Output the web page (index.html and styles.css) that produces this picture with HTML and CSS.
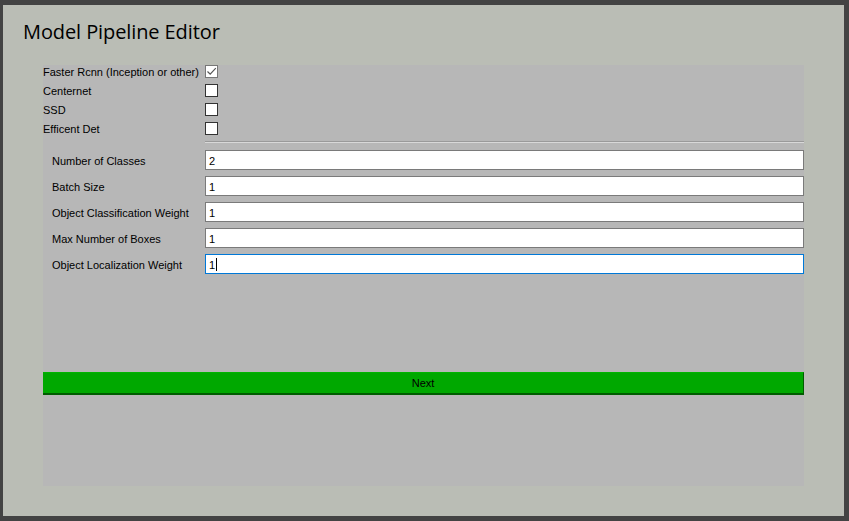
FILE: index.html
```html
<!DOCTYPE html>
<html>
<head>
<meta charset="utf-8">
<link rel="stylesheet" href="styles.css">
</head>
<body>
<div class="window">
  <h1 class="title">Model Pipeline Editor</h1>
  <div class="panel">
    <div class="checks">
      <label class="check-row"><span class="check-label">Faster Rcnn (Inception or other)</span><span class="box checked"><svg width="11" height="11" viewBox="0 0 11 11"><path d="M1.5 5.5 L4.2 8.2 L9.8 2.2" fill="none" stroke="#555" stroke-width="1.2"/></svg></span></label>
      <label class="check-row"><span class="check-label">Centernet</span><span class="box"></span></label>
      <label class="check-row"><span class="check-label">SSD</span><span class="box"></span></label>
      <label class="check-row"><span class="check-label">Efficent Det</span><span class="box"></span></label>
    </div>
    <div class="sep"></div>
    <div class="fields">
      <div class="field"><span class="field-label">Number of Classes</span><div class="input">2</div></div>
      <div class="field"><span class="field-label">Batch Size</span><div class="input">1</div></div>
      <div class="field"><span class="field-label">Object Classification Weight</span><div class="input">1</div></div>
      <div class="field"><span class="field-label">Max Number of Boxes</span><div class="input">1</div></div>
      <div class="field"><span class="field-label">Object Localization Weight</span><div class="input focus">1<span class="caret"></span></div></div>
    </div>
    <div class="btn">Next</div>
  </div>
</div>
</body>
</html>
```
FILE: styles.css
```css
html, body {
  margin: 0;
  padding: 0;
}
body {
  background: #434343;
  width: 849px;
  height: 521px;
  overflow: hidden;
  padding-top: 5px;
  box-sizing: border-box;
  font-family: "Liberation Sans", Arial, sans-serif;
  font-size: 11px;
  color: #000;
}
.window {
  margin-left: 3px;
  width: 841px;
  height: 511px;
  background: #babdb5;
  box-sizing: border-box;
  padding-top: 15px;
}
.title {
  margin: 0 0 0 20px;
  font-family: "Open Sans", sans-serif;
  font-weight: normal;
  font-size: 20px;
  line-height: 24px;
  height: 24px;
  letter-spacing: -0.1px;
}
.panel {
  margin-top: 21px;
  margin-left: 40px;
  width: 761px;
  height: 421px;
  background: #b7b7b7;
  display: flex;
  flex-direction: column;
}
.checks {
  display: flex;
  flex-direction: column;
  gap: 6px;
}
.check-row {
  display: flex;
  align-items: center;
  height: 13px;
}
.check-label {
  width: 162px;
}
.box {
  width: 13px;
  height: 13px;
  box-sizing: border-box;
  border: 1px solid #333;
  background: #fff;
  display: flex;
  align-items: center;
  justify-content: center;
}
.box.checked {
  border-color: #777;
}
.sep {
  margin-top: 6px;
  margin-left: 162px;
  border-top: 1px solid #9a9a9a;
  border-bottom: 1px solid #d8d8d8;
  height: 0;
}
.fields {
  margin-top: 7px;
  display: flex;
  flex-direction: column;
  gap: 6px;
}
.field {
  display: flex;
  align-items: center;
  height: 20px;
}
.field-label {
  width: 153px;
  padding-left: 9px;
  padding-top: 2px;
}
.input {
  flex: 1;
  height: 20px;
  box-sizing: border-box;
  border: 1px solid #7a7a7a;
  background: #fff;
  padding-left: 3px;
  padding-top: 1px;
  display: flex;
  align-items: center;
}
.input.focus {
  border-color: #0078d7;
}
.caret {
  display: inline-block;
  width: 1px;
  height: 13px;
  background: #000;
  margin-left: 1px;
}
.btn {
  margin-top: 98px;
  height: 23px;
  box-sizing: border-box;
  background: #00a800;
  border-bottom: 2px solid #005c00;
  border-right: 1px solid #005c00;
  border-top: 1px solid #00b400;
  text-align: center;
  line-height: 21px;
}
```
